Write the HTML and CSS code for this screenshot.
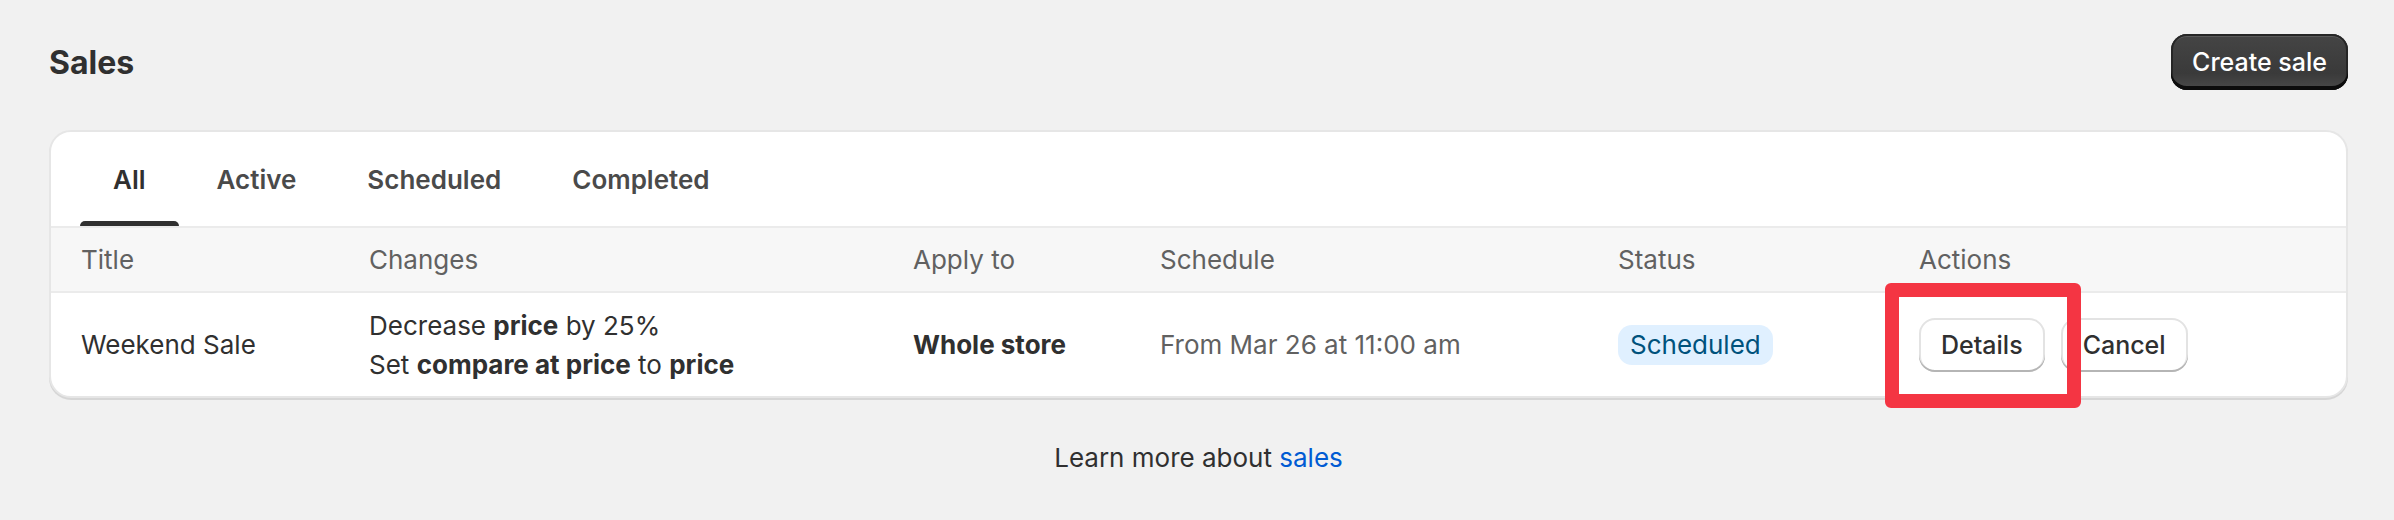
FILE: index.html
```html
<!DOCTYPE html>
<html lang="en">
  <head>
    <meta charset="UTF-8">
    <meta name="viewport" content="width=device-width, initial-scale=1.0">
    <title>Sales</title>
    <link rel="stylesheet" href="styles.css">
  </head>
  <body>
    <div class="page">
      <!-- Page header -->
      <div class="page-header">
        <h1 class="page-title">Sales</h1>
        <button class="btn btn-primary">Create sale</button>
      </div>

      <!-- Sales card -->
      <div class="card">
        <div class="tabs">
          <button class="tab tab-selected">All</button>
          <button class="tab">Active</button>
          <button class="tab">Scheduled</button>
          <button class="tab">Completed</button>
        </div>

        <div class="row row-head">
          <div>Title</div>
          <div>Changes</div>
          <div>Apply to</div>
          <div>Schedule</div>
          <div>Status</div>
          <div>Actions</div>
        </div>

        <div class="row row-body">
          <div>Weekend Sale</div>
          <div class="changes">
            <div>Decrease <b>price</b> by 25%</div>
            <div>Set <b>compare at price</b> to <b>price</b></div>
          </div>
          <div><b>Whole store</b></div>
          <div class="muted">From Mar 26 at 11:00 am</div>
          <div><span class="badge">Scheduled</span></div>
          <div class="actions">
            <span class="highlight-wrap">
              <button class="btn btn-secondary">Details</button>
              <span class="highlight"></span>
            </span>
            <button class="btn btn-secondary">Cancel</button>
          </div>
        </div>
      </div>

      <p class="footer-help">Learn more about <a href="#">sales</a></p>
    </div>
  </body>
</html>
```

FILE: styles.css
```css
body {
  margin: 0;
  background-color: #f1f1f1;
  font-family: Inter, "Noto Sans", sans-serif;
  font-size: 26px;
  color: #303030;
}

.page {
  padding: 34px 46px 0 49px;
}

.page-header {
  display: flex;
  justify-content: space-between;
  align-items: center;
  height: 56px;
}

.page-title {
  margin: 0;
  font-size: 32px;
  font-weight: 700;
  color: #303030;
}

.btn {
  font-family: inherit;
  font-size: 25px;
  font-weight: 500;
  border: none;
  cursor: pointer;
  border-radius: 16px;
}

.btn-primary {
  height: 56px;
  padding: 0 21px;
  color: #fff;
  background: linear-gradient(180deg, #454545 0%, #3a3a3a 70%, #4a4a4a 100%);
  box-shadow: inset 0 -4px 0 #0c0c0c, inset 0 0 0 2px #262626, inset 0 3px 0 #5a5a5a;
}

.btn-secondary {
  height: 54px;
  padding: 0 22px;
  color: #303030;
  background: #fff;
  box-shadow: inset 0 -2px 0 #b5b5b5, inset 0 0 0 2px #e3e3e3;
}

.card {
  margin-top: 40px;
  background: #fff;
  border: 2px solid #e6e6e6;
  border-radius: 22px;
  box-shadow: 0 2px 0 #d6d6d6;
}

.tabs {
  display: flex;
  gap: 5px;
  height: 94px;
  padding-left: 29px;
  border-bottom: 2px solid #ebebeb;
}

.tab {
  position: relative;
  padding: 0 33px;
  border: none;
  background: none;
  font-family: inherit;
  font-size: 26px;
  font-weight: 600;
  color: #4a4a4a;
  cursor: pointer;
}

.tab-selected {
  color: #303030;
}

.tab-selected::after {
  content: "";
  position: absolute;
  left: 0;
  right: 0;
  bottom: 0;
  height: 5px;
  background: #303030;
  border-radius: 5px 5px 0 0;
}

.row {
  display: grid;
  grid-template-columns: 288px 544px 247px 458px 301px 1fr;
  align-items: center;
  padding-left: 30px;
}

.row-head {
  height: 63px;
  background: #f7f7f7;
  color: #616161;
  border-bottom: 2px solid #ebebeb;
}

.row-body {
  height: 103px;
}

.changes {
  line-height: 39px;
}

.muted {
  color: #616161;
}

.badge {
  display: inline-block;
  padding: 0 12px;
  line-height: 40px;
  border-radius: 14px;
  background: #e0f0ff;
  color: #00527c;
}

.actions {
  display: flex;
  gap: 16px;
  align-items: center;
}

.highlight-wrap {
  position: relative;
  display: inline-flex;
}

.highlight {
  position: absolute;
  left: -34px;
  top: -35px;
  right: -36px;
  bottom: -36px;
  border: 14px solid #f43543;
  border-radius: 6px;
  pointer-events: none;
  z-index: 2;
}

.footer-help {
  margin: 40px 0 0;
  text-align: center;
  line-height: 40px;
}

.footer-help a {
  color: #005bd3;
  text-decoration: none;
}
```
